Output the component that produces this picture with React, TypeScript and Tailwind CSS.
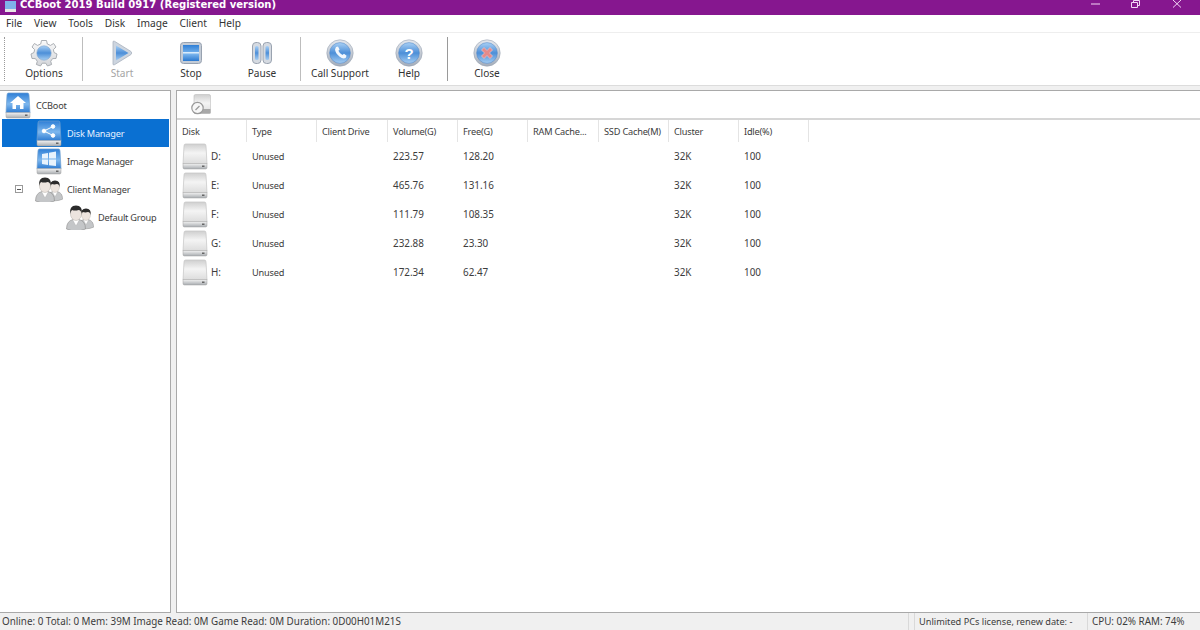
const disks = [
  { name: "D:", volume: "223.57", free: "128.20" },
  { name: "E:", volume: "465.76", free: "131.16" },
  { name: "F:", volume: "111.79", free: "108.35" },
  { name: "G:", volume: "232.88", free: "23.30" },
  { name: "H:", volume: "172.34", free: "62.47" },
];

const columns = ["Disk", "Type", "Client Drive", "Volume(G)", "Free(G)", "RAM Cache...", "SSD Cache(M)", "Cluster", "Idle(%)"];

function Defs() {
  return (
    <svg width="0" height="0" className="absolute">
      <defs>
        <linearGradient id="blueBall" x1="0" y1="0" x2="0" y2="1">
          <stop offset="0" stopColor="#a9d0f5" />
          <stop offset="0.5" stopColor="#4d8fd8" />
          <stop offset="1" stopColor="#a5cdf2" />
        </linearGradient>
        <linearGradient id="ring" x1="0" y1="0" x2="0" y2="1">
          <stop offset="0" stopColor="#e4e8ee" />
          <stop offset="1" stopColor="#a4adba" />
        </linearGradient>
        <linearGradient id="driveTop" x1="0" y1="0" x2="0" y2="1">
          <stop offset="0" stopColor="#cfcfcf" />
          <stop offset="0.45" stopColor="#f4f4f4" />
          <stop offset="1" stopColor="#dcdcdc" />
        </linearGradient>
        <linearGradient id="driveBlue" x1="0" y1="0" x2="0" y2="1">
          <stop offset="0" stopColor="#2f7fd6" />
          <stop offset="0.55" stopColor="#7db7ee" />
          <stop offset="1" stopColor="#2b79d0" />
        </linearGradient>
        <linearGradient id="metal" x1="0" y1="0" x2="0" y2="1">
          <stop offset="0" stopColor="#f2f2f2" />
          <stop offset="1" stopColor="#a8acb0" />
        </linearGradient>
        <linearGradient id="gear" x1="0" y1="0" x2="0" y2="1">
          <stop offset="0" stopColor="#fafafa" />
          <stop offset="1" stopColor="#d4d6da" />
        </linearGradient>
      </defs>
    </svg>
  );
}

function Drive({ blue, children }: { blue?: boolean; children?: React.ReactNode }) {
  return (
    <svg width="26" height="27" viewBox="0 0 26 27" className="shrink-0">
      <path d="M3.5 1 H22.5 Q24 1 24 3 L25 21 H1 L2 3 Q2 1 3.5 1Z" fill={blue ? "url(#driveBlue)" : "url(#driveTop)"} stroke={blue ? "#6f9fd0" : "#c4c4c4"} strokeWidth="0.7" />
      <path d="M1 20.5 H25 V24.5 Q25 26 23.5 26 H2.5 Q1 26 1 24.5Z" fill="url(#metal)" stroke="#a0a0a0" strokeWidth="0.5" />
      <rect x="20" y="22.5" width="2.5" height="1.5" fill="#666" />
      {children}
    </svg>
  );
}

function People() {
  const bust = (x: number, y: number, s: number) => (
    <g transform={`translate(${x} ${y}) scale(${s})`}>
      <path d="M0.5 24 Q0.5 16 7 14.5 L13 14.5 Q19.5 16 19.5 24 Q10 28 0.5 24Z" fill="#c4c6c8" stroke="#8c8c8c" strokeWidth="0.6" />
      <path d="M6.5 14.5 L10 21 L13.5 14.5Z" fill="#ffffff" stroke="#a8a8a8" strokeWidth="0.4" />
      <ellipse cx="10" cy="8.5" rx="5.6" ry="7" fill="#ece4de" stroke="#aaa39c" strokeWidth="0.4" />
      <path d="M4.2 9 Q3 0.5 10 0.5 Q17 0.5 15.8 9 Q15 5 12.5 5 Q9 6 6 5 Q4.8 6 4.2 9Z" fill="#2b2b2b" />
    </g>
  );
  return (
    <svg width="28" height="25" viewBox="0 0 28 25" className="shrink-0">
      {bust(12, 3, 0.8)}
      {bust(0, 0, 1)}
    </svg>
  );
}

function Ball({ children }: { children?: React.ReactNode }) {
  return (
    <svg width="28" height="28" viewBox="0 0 28 28">
      <circle cx="14" cy="14" r="13.2" fill="url(#ring)" stroke="#9aa5b3" strokeWidth="0.6" />
      <circle cx="14" cy="14" r="10.4" fill="url(#blueBall)" stroke="#4c83c4" strokeWidth="0.5" />
      {children}
    </svg>
  );
}

function ToolIcon({ name }: { name: string }) {
  if (name === "Options") {
    return (
      <svg width="28" height="28" viewBox="0 0 28 28">
        <path d="M11.5 1.5 H16.5 L17.3 5 L20.5 6.4 L23.6 4.5 L26 8 L23.4 10.6 L24 13.5 L27 15 L26 19.5 L22.6 19.6 L20.7 22.3 L21.6 25.5 L17.5 27 L15.7 24.2 L12.3 24.2 L10.5 27 L6.4 25.5 L7.3 22.3 L5.4 19.6 L2 19.5 L1 15 L4 13.5 L4.6 10.6 L2 8 L4.4 4.5 L7.5 6.4 L10.7 5Z" fill="url(#gear)" stroke="#a3a7ad" strokeWidth="0.9" strokeLinejoin="round" />
        <circle cx="14" cy="14" r="7.2" fill="url(#blueBall)" stroke="#7fa4cc" strokeWidth="0.6" />
      </svg>
    );
  }
  if (name === "Start") {
    return (
      <svg width="22" height="26" viewBox="0 0 22 26">
        <path d="M2 2 Q2 0.5 3.5 1.3 L20 11.5 Q21.5 13 20 14.5 L3.5 24.7 Q2 25.5 2 24Z" fill="#cdd5df" stroke="#a9b2bf" strokeWidth="0.8" />
        <path d="M5 5.5 L17.5 13 L5 20.5Z" fill="url(#blueBall)" />
      </svg>
    );
  }
  if (name === "Stop") {
    return (
      <svg width="22" height="22" viewBox="0 0 22 22">
        <rect x="0.5" y="0.5" width="21" height="21" rx="3" fill="#c3cbd6" stroke="#98a2b0" />
        <rect x="3" y="3" width="16" height="16" fill="url(#driveBlue)" />
        <rect x="3" y="10" width="16" height="1.5" fill="#d9ecfc" />
      </svg>
    );
  }
  if (name === "Pause") {
    return (
      <svg width="20" height="22" viewBox="0 0 20 22">
        <rect x="0.5" y="0.5" width="8.5" height="21" rx="3.5" fill="#d5dae1" stroke="#9aa3b0" />
        <rect x="11" y="0.5" width="8.5" height="21" rx="3.5" fill="#d5dae1" stroke="#9aa3b0" />
        <rect x="3" y="4" width="3.5" height="14" rx="1.5" fill="url(#blueBall)" />
        <rect x="13.5" y="4" width="3.5" height="14" rx="1.5" fill="url(#blueBall)" />
      </svg>
    );
  }
  if (name === "Call Support") {
    return (
      <Ball>
        <path d="M10 8 L12 7.4 L13.6 10.4 L12.4 11.8 Q13.6 14.6 16.4 16 L18 14.8 L20.6 16.8 L19.6 19 Q17 20.4 13.4 17.6 Q9.4 14.4 9 10.6Z" fill="#fff" opacity="0.92" />
      </Ball>
    );
  }
  if (name === "Help") {
    return (
      <Ball>
        <text x="14" y="19.5" textAnchor="middle" fontSize="15" fontWeight="700" fill="#fff" fontFamily="Liberation Sans, sans-serif">?</text>
      </Ball>
    );
  }
  return (
    <Ball>
      <path d="M8.5 11 L11 8.5 L14 11.5 L17 8.5 L19.5 11 L16.5 14 L19.5 17 L17 19.5 L14 16.5 L11 19.5 L8.5 17 L11.5 14Z" fill="#e58a8a" stroke="#f6cccc" strokeWidth="0.6" />
    </Ball>
  );
}

function ToolButton({ label, width, disabled }: { label: string; width: string; disabled?: boolean }) {
  return (
    <div className={`flex flex-col items-center ${width}`}>
      <div className="h-[28px] flex items-center justify-center">
        <ToolIcon name={label} />
      </div>
      <span className={`-mt-px text-[10.1px] leading-[14px] ${disabled ? "text-[#a5a5a5]" : "text-[#333333]"}`}>{label}</span>
    </div>
  );
}

function TreeRow({ indent, label, icon, selected, toggle }: { indent: string; label: string; icon: React.ReactNode; selected?: boolean; toggle?: boolean }) {
  return (
    <div className={`relative h-[28px] flex items-center ${indent}`}>
      {selected && <div className="absolute left-[2px] right-[1px] top-0 bottom-0 bg-[#0a70d2]" />}
      {toggle && (
        <div className="absolute left-[15px] top-[10px] w-[8px] h-[8px] border border-[#9a9a9a] flex items-center justify-center">
          <div className="w-[4px] h-px bg-[#555555]" />
        </div>
      )}
      <div className="relative w-[30px] flex justify-center">{icon}</div>
      <span className={`relative ml-[3px] mt-[2px] text-[9.2px] tracking-[-0.2px] whitespace-nowrap ${selected ? "text-[#e6f2ff]" : "text-[#3c3c3c]"}`}>{label}</span>
    </div>
  );
}

export default function App() {
  return (
    <div className="w-[1200px] h-[630px] overflow-hidden flex flex-col bg-[#f0f0f0] text-[#3c3c3c] font-['Noto_Sans',sans-serif]">
      <Defs />
      {/* title bar */}
      <div className="h-[15px] shrink-0 bg-[#86178f] flex items-start overflow-hidden">
        <svg width="11" height="11" viewBox="0 0 11 11" className="ml-[5px] mt-[1px]">
          <rect x="0" y="0" width="11" height="8" fill="#7fb3ea" />
          <rect x="0" y="8" width="11" height="3" fill="#e6e6e6" />
        </svg>
        <span className="ml-[4px] text-[10.05px] leading-[9px] font-bold text-white font-['DejaVu_Sans',sans-serif] whitespace-nowrap">CCBoot 2019 Build 0917 (Registered version)</span>
        <div className="ml-auto flex items-start text-[#f3d6f5]">
          <svg width="12" height="8" viewBox="0 0 12 8"><path d="M1 4 H10" stroke="currentColor" strokeWidth="1" /></svg>
          <svg width="12" height="8" viewBox="0 0 12 8" className="ml-[29px]"><path d="M0.5 2.5 H6.5 V7.5 H0.5Z M2.5 2.5 V0.5 H8.5 V5.5 H6.5" stroke="currentColor" fill="none" /></svg>
          <svg width="12" height="8" viewBox="0 0 12 8" className="ml-[29px] mr-[16px]"><path d="M1 0 L9 7.5 M9 0 L1 7.5" stroke="currentColor" strokeWidth="1" fill="none" /></svg>
        </div>
      </div>

      {/* menu */}
      <div className="h-[17px] shrink-0 bg-white flex items-center pl-[6px] gap-[11.8px] text-[10.2px] text-[#333333]">
        {["File", "View", "Tools", "Disk", "Image", "Client", "Help"].map((m) => (
          <span key={m}>{m}</span>
        ))}
      </div>

      {/* toolbar */}
      <div className="h-[54px] shrink-0 bg-white border-t border-[#eeeeee] border-b border-b-[#dcdcdc] flex items-center">
        <div className="ml-[4px] w-px h-[44px] border-l border-dotted border-[#9a9a9a]" />
        <ToolButton label="Options" width="w-[72px] ml-[3px]" />
        <div className="ml-[2px] w-px h-[44px] bg-[#bdbdbd]" />
        <ToolButton label="Start" width="w-[78px]" disabled />
        <ToolButton label="Stop" width="w-[60px]" />
        <ToolButton label="Pause" width="w-[70px] ml-[6px]" />
        <div className="ml-[3px] w-px h-[44px] bg-[#bdbdbd]" />
        <ToolButton label="Call Support" width="w-[70px] ml-[4px]" />
        <ToolButton label="Help" width="w-[68px] mr-[4px]" />
        <div className="w-px h-[44px] bg-[#9a9a9a]" />
        <ToolButton label="Close" width="w-[78px]" />
      </div>

      {/* main */}
      <div className="flex-1 min-h-0 flex pt-[4px] gap-[5px]">
        <div className="w-[171px] bg-white border-t border-r border-b border-[#a9a9a9]">
          <TreeRow indent="pl-[3px]" label="CCBoot" icon={
            <Drive blue>
              <path d="M13 4 L21 11 H18.5 V17 H15 V13 H11 V17 H7.5 V11 H5Z" fill="#fff" />
            </Drive>
          } />
          <TreeRow selected indent="pl-[34px]" label="Disk Manager" icon={
            <Drive blue>
              <g fill="#fff" stroke="#fff">
                <circle cx="8" cy="11" r="1.8" />
                <circle cx="17" cy="6.5" r="1.8" />
                <circle cx="17" cy="15.5" r="1.8" />
                <path d="M8 11 L17 6.5 M8 11 L17 15.5" strokeWidth="1" />
              </g>
            </Drive>
          } />
          <TreeRow indent="pl-[34px]" label="Image Manager" icon={
            <Drive blue>
              <path d="M6 6 L12 5 V10.5 H6Z M13 4.8 L20 3.6 V10.5 H13Z M6 11.5 H12 V17 L6 16Z M13 11.5 H20 V18 L13 17.2Z" fill="#e8f3fd" />
            </Drive>
          } />
          <TreeRow toggle indent="pl-[34px]" label="Client Manager" icon={<People />} />
          <TreeRow indent="pl-[65px]" label="Default Group" icon={<People />} />
        </div>

        <div className="flex-1 flex flex-col bg-white border-t border-l border-b border-[#a9a9a9]">
          <div className="h-[29px] shrink-0 border-b-2 border-[#d6d6d6] flex items-center pl-[14px]">
            <svg width="20" height="21" viewBox="0 0 20 21">
              <rect x="3" y="0.5" width="16.5" height="19" rx="1.5" fill="url(#driveTop)" stroke="#bdbdbd" strokeWidth="0.6" />
              <rect x="3.5" y="15" width="16" height="4.5" fill="#a8a8a8" />
              <circle cx="6.5" cy="14" r="5.7" fill="#f7f7f7" stroke="#9a9a9a" strokeWidth="1.2" />
              <path d="M4.5 16 L8.5 12" stroke="#9a9a9a" strokeWidth="1.2" />
            </svg>
          </div>
          <div className="grid grid-cols-[70px_70px_71px_70px_70px_71px_70px_70px_70px] w-fit">
            {columns.map((c) => (
              <div key={c} className="h-[22px] pt-px border-r border-[#e4e4e4] pl-[5px] flex items-center text-[9.2px] tracking-[-0.2px] text-[#3c3c3c] whitespace-nowrap overflow-hidden">
                {c}
              </div>
            ))}
            {disks.map((d) => (
              <div key={d.name} className="contents">
                <div className="h-[29px] flex items-center pl-[5px] gap-[3px] text-[9.9px]">
                  <Drive />
                  <span>{d.name}</span>
                </div>
                <div className="h-[29px] flex items-center pl-[5px] text-[9.2px] tracking-[-0.2px]">Unused</div>
                <div />
                <div className="h-[29px] flex items-center pl-[5px] text-[9.9px]">{d.volume}</div>
                <div className="h-[29px] flex items-center pl-[5px] text-[9.9px]">{d.free}</div>
                <div />
                <div />
                <div className="h-[29px] flex items-center pl-[5px] text-[9.9px]">32K</div>
                <div className="h-[29px] flex items-center pl-[5px] text-[9.9px]">100</div>
              </div>
            ))}
          </div>
        </div>
      </div>

      {/* status bar */}
      <div className="h-[17px] shrink-0 flex items-center text-[9.85px] text-[#3c3c3c]">
        <span className="pl-[2px] w-[908px] whitespace-nowrap">Online: 0 Total: 0 Mem: 39M Image Read: 0M Game Read: 0M Duration: 0D00H01M21S</span>
        <div className="w-[7px] h-full border-l border-r border-[#d9d9d9]" />
        <span className="pl-[4px] w-[173px] h-full flex items-center border-r border-[#d9d9d9] text-[9.2px] whitespace-nowrap">Unlimited PCs license, renew date: -</span>
        <span className="pl-[4px] whitespace-nowrap">CPU: 02% RAM: 74%</span>
      </div>
    </div>
  );
}
